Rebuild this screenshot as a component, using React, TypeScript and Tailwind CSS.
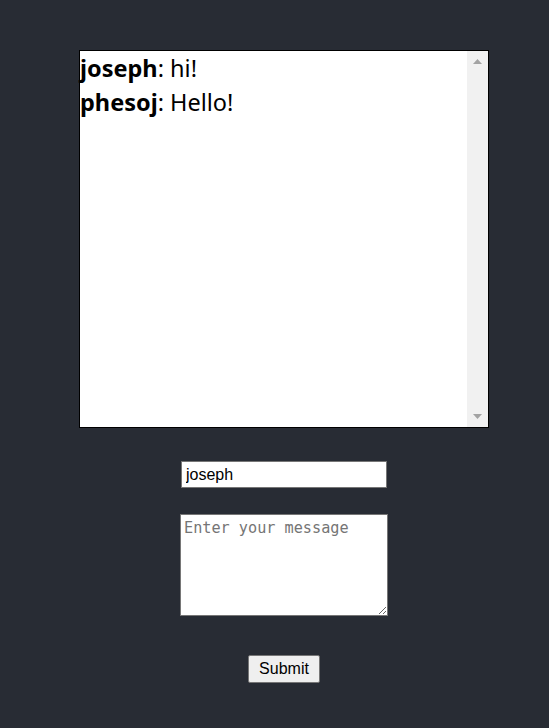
import React from "react";

export default function App() {
  return (
    <div className="min-h-screen w-full bg-[#282c34] pl-[19px] flex flex-col items-center pt-[50px]">
      <div className="w-[410px] h-[378px] border border-black bg-white flex">
        <div className="flex-1 text-[23.5px] leading-[34px] text-black" style={{ fontFamily: '"Noto Sans", sans-serif' }}>
          <div>
            <span className="font-bold">joseph</span>: hi!
          </div>
          <div>
            <span className="font-bold">phesoj</span>: Hello!
          </div>
        </div>
        <div className="w-[21px] h-full bg-[#f1f1f1] flex flex-col justify-between items-center py-[8px]">
          <svg width="9" height="5" viewBox="0 0 9 5"><polygon points="0,5 4.5,0 9,5" fill="#a3a3a3" /></svg>
          <svg width="9" height="5" viewBox="0 0 9 5"><polygon points="0,0 4.5,5 9,0" fill="#a3a3a3" /></svg>
        </div>
      </div>
      <input
        className="mt-[33px] w-[206px] h-[27px] bg-white border border-[#767676] px-[4px] text-[16px] text-black outline-none"
        style={{ fontFamily: '"Liberation Sans", Arial, sans-serif' }}
        defaultValue="joseph"
      />
      <textarea
        className="mt-[26px] w-[208px] h-[102px] bg-white border border-[#767676] px-[3px] py-[2px] text-[15.2px] text-black placeholder:text-[#757575] outline-none"
        style={{ fontFamily: '"DejaVu Sans Mono", monospace' }}
        placeholder="Enter your message"
      />
      <button
        className="mt-[39px] w-[72px] h-[28px] bg-[#efefef] border border-[#767676] rounded-[2px] text-[16px] text-black"
        style={{ fontFamily: '"Liberation Sans", Arial, sans-serif' }}
      >
        Submit
      </button>
    </div>
  );
}
